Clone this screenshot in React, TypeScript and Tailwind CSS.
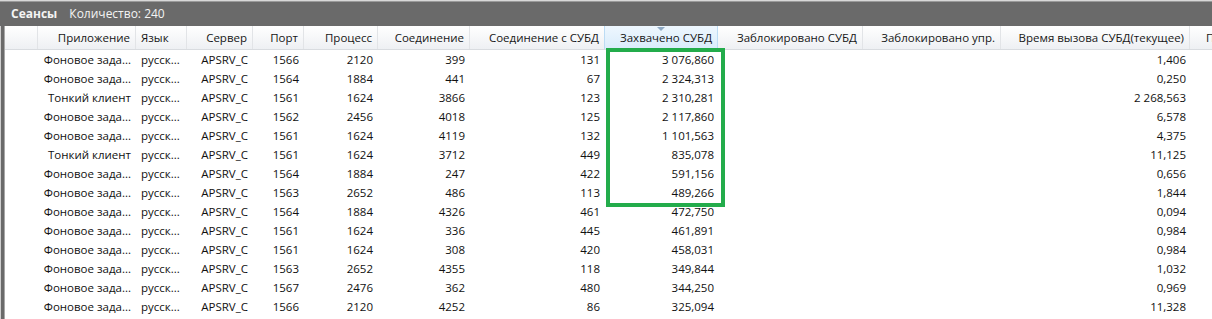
const columns = [
  { title: "", width: "w-[33px]", align: "right" },
  { title: "Приложение", width: "w-[98px]", align: "right" },
  { title: "Язык", width: "w-[51px]", align: "left" },
  { title: "Сервер", width: "w-[66px]", align: "right" },
  { title: "Порт", width: "w-[51px]", align: "right" },
  { title: "Процесс", width: "w-[74px]", align: "right" },
  { title: "Соединение", width: "w-[92px]", align: "right" },
  { title: "Соединение с СУБД", width: "w-[135px]", align: "right" },
  { title: "Захвачено СУБД", width: "w-[114px]", align: "right" },
  { title: "Заблокировано СУБД", width: "w-[145px]", align: "right" },
  { title: "Заблокировано упр.", width: "w-[138px]", align: "right" },
  { title: "Время вызова СУБД(текущее)", width: "w-[189px]", align: "right" },
];

const rows = [
  ["Фоновое зада...", "1566", "2120", "399", "131", "3 076,860", "1,406"],
  ["Фоновое зада...", "1564", "1884", "441", "67", "2 324,313", "0,250"],
  ["Тонкий клиент", "1561", "1624", "3866", "123", "2 310,281", "2 268,563"],
  ["Фоновое зада...", "1562", "2456", "4018", "125", "2 117,860", "6,578"],
  ["Фоновое зада...", "1561", "1624", "4119", "132", "1 101,563", "4,375"],
  ["Тонкий клиент", "1561", "1624", "3712", "449", "835,078", "11,125"],
  ["Фоновое зада...", "1564", "1884", "247", "422", "591,156", "0,656"],
  ["Фоновое зада...", "1563", "2652", "486", "113", "489,266", "1,844"],
  ["Фоновое зада...", "1564", "1884", "4326", "461", "472,750", "0,094"],
  ["Фоновое зада...", "1561", "1624", "336", "445", "461,891", "0,984"],
  ["Фоновое зада...", "1561", "1624", "308", "420", "458,031", "0,984"],
  ["Фоновое зада...", "1563", "2652", "4355", "118", "349,844", "1,032"],
  ["Фоновое зада...", "1567", "2476", "362", "480", "344,250", "0,969"],
  ["Фоновое зада...", "1566", "2120", "4252", "86", "325,094", "11,328"],
];

function Cell({ width, align, children }: { width: string; align: string; children?: React.ReactNode }) {
  return (
    <div
      className={`${width} shrink-0 overflow-hidden whitespace-nowrap ${
        align === "left" ? "pl-[5px] text-left" : "pr-[5px] text-right"
      }`}
    >
      {children}
    </div>
  );
}

export default function App() {
  return (
    <div className="h-[319px] w-[1212px] overflow-hidden bg-white font-['Open_Sans',sans-serif] text-[11.5px] text-[#111]">
      <div className="h-[2px] border-t border-[#d8d8d8] bg-[#9a9a9a]" />
      <div className="flex h-[24px] items-center gap-[12px] bg-[#6a6a6a] pl-[11px] text-[12px] text-[#f4f4f4]">
        <span className="font-bold">Сеансы</span>
        <span>Количество: 240</span>
      </div>
      <div className="flex h-[293px]">
        <div className="w-[4px] shrink-0 border-l border-[#cfcfcf] bg-[#6a6a6a]" />
        <div className="relative min-w-0 flex-1 border-l border-[#a8a8a8]">
          {/* header */}
          <div className="flex h-[24px] border-b border-[#d9dce0] bg-gradient-to-b from-white to-[#eef0f3] text-[#161616]">
            {columns.map((col) => {
              const sorted = col.title === "Захвачено СУБД";
              return (
                <div
                  key={col.title || "blank"}
                  className={`relative flex ${col.width} shrink-0 items-center border-r ${
                    sorted
                      ? "border-l border-[#bcdcf4] bg-gradient-to-b from-[#eef7fe] to-[#d9ecfb] -ml-px"
                      : "border-[#e2e4e7]"
                  } px-[5px] whitespace-nowrap ${col.align === "left" ? "justify-start" : "justify-end"}`}
                >
                  {sorted && (
                    <svg className="absolute left-1/2 top-[1px] -translate-x-1/2" width="8" height="4" viewBox="0 0 8 4">
                      <path d="M0 0h8L4 4z" fill="#8ea9c4" />
                    </svg>
                  )}
                  {col.title}
                </div>
              );
            })}
            <div className="min-w-0 flex-1 overflow-hidden whitespace-nowrap pl-[16px] leading-[24px]">П</div>
          </div>

          {/* rows */}
          {rows.map((r, i) => (
            <div key={i} className="flex h-[19px] items-center">
              <Cell width="w-[33px]" align="right" />
              <Cell width="w-[98px]" align="right">{r[0]}</Cell>
              <Cell width="w-[51px]" align="left">русск...</Cell>
              <Cell width="w-[66px]" align="right">APSRV_C</Cell>
              <Cell width="w-[51px]" align="right">{r[1]}</Cell>
              <Cell width="w-[74px]" align="right">{r[2]}</Cell>
              <Cell width="w-[92px]" align="right">{r[3]}</Cell>
              <Cell width="w-[135px]" align="right">{r[4]}</Cell>
              <Cell width="w-[114px]" align="right">{r[5]}</Cell>
              <Cell width="w-[145px]" align="right" />
              <Cell width="w-[138px]" align="right" />
              <Cell width="w-[189px]" align="right">{r[6]}</Cell>
            </div>
          ))}

          {/* highlight box */}
          <div className="pointer-events-none absolute left-[601px] top-[22px] h-[159px] w-[119px] border-4 border-[#23ac4b]" />
        </div>
      </div>
    </div>
  );
}
